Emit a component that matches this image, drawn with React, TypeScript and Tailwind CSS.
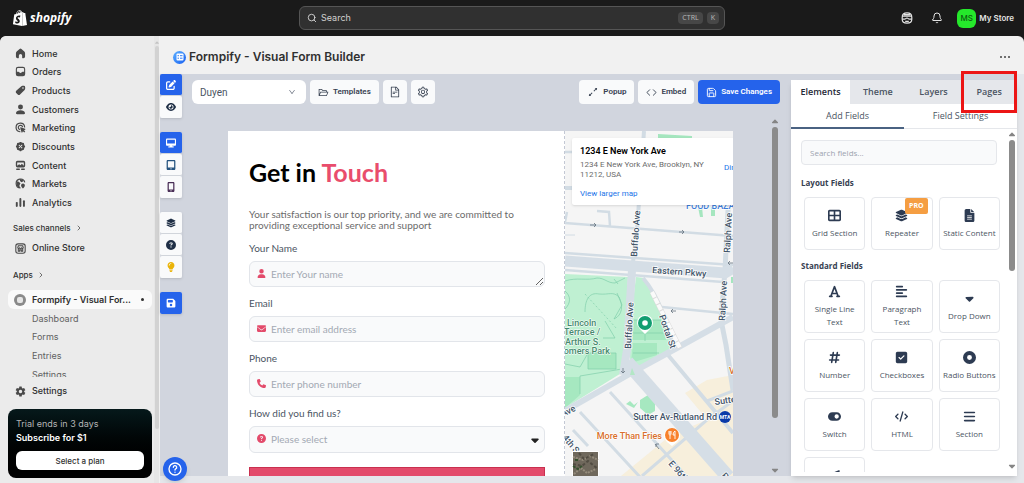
import type { ReactNode } from 'react'
import clsx from 'clsx'
import { ChevronRight, Code, Save, Search, Bell } from 'lucide-react'
import { AiOutlineArrowsAlt, AiOutlineDown, AiOutlineFileText, AiOutlineFolderOpen, AiOutlineSetting } from 'react-icons/ai'
import { IoSettingsSharp } from 'react-icons/io5'
import { SiShopify } from 'react-icons/si'
import { TbRosetteDiscountFilled } from 'react-icons/tb'
import {
    FaAlignLeft,
    FaBars,
    FaCaretDown,
    FaCircleDot,
    FaCircleQuestion,
    FaCode,
    FaDesktop,
    FaEnvelope,
    FaEye,
    FaFileLines,
    FaFloppyDisk,
    FaFont,
    FaHashtag,
    FaLayerGroup,
    FaLightbulb,
    FaLocationArrow,
    FaMobileScreenButton,
    FaPenToSquare,
    FaPhone,
    FaSquareCheck,
    FaTableCellsLarge,
    FaTabletScreenButton,
    FaToggleOn,
    FaUser,
} from 'react-icons/fa6'

function NavIcon({ children }: { children: ReactNode }) {
    return (
        <svg viewBox="0 0 20 20" className="size-[11px] shrink-0" fill="currentColor" aria-hidden="true">
            {children}
        </svg>
    )
}

const navItems = [
    {
        label: 'Home',
        icon: <NavIcon><path d="M8.300 1.800a2.600 2.600 0 0 1 3.400 0l5.200 4.600c.9.800 1.400 1.900 1.400 3.100v6a3 3 0 0 1-3 3h-1.500a.8.800 0 0 1-.8-.8V14a3 3 0 0 0-6 0v3.700c0 .4-.4.800-.8.800H4.700a3 3 0 0 1-3-3v-6c0-1.200.5-2.300 1.400-3.100z" /></NavIcon>,
    },
    {
        label: 'Orders',
        icon: <NavIcon><path fillRule="evenodd" d="M5.500 1.500h9a4 4 0 0 1 4 4v9a4 4 0 0 1-4 4h-9a4 4 0 0 1-4-4v-9a4 4 0 0 1 4-4zm0 2a2 2 0 0 0-2 2v5h2.700c.7 0 1.300.4 1.600 1 .4.900 1.200 1.300 2.200 1.300s1.800-.4 2.200-1.300c.3-.6.9-1 1.600-1h2.700v-5a2 2 0 0 0-2-2z" /></NavIcon>,
    },
    {
        label: 'Products',
        icon: <NavIcon><path fillRule="evenodd" d="M11 2.500c.700-.6 1.600-1 2.500-1h2.500a2.500 2.500 0 0 1 2.500 2.500v2.500c0 .9-.4 1.800-1 2.500l-8.300 8.300a3 3 0 0 1-4.200 0l-2.800-2.800a3 3 0 0 1 0-4.200zM14.500 7a1.500 1.500 0 1 0 0-3 1.500 1.500 0 0 0 0 3z" /></NavIcon>,
    },
    {
        label: 'Customers',
        icon: <NavIcon><circle cx="10" cy="5.500" r="4.500" /><path d="M1.800 16.500c.6-3 4-5 8.200-5s7.600 2 8.200 5c.3 1.200-.8 2-2 2H3.800c-1.200 0-2.300-.8-2-2z" /></NavIcon>,
    },
    {
        label: 'Marketing',
        icon: (
            <NavIcon>
                <path d="M17.500 9A7.800 7.800 0 1 0 9 17.700" fill="none" stroke="currentColor" strokeWidth="2.200" strokeLinecap="round" />
                <path d="M13.700 8.500A4 4 0 1 0 8.500 13.700" fill="none" stroke="currentColor" strokeWidth="2.200" strokeLinecap="round" />
                <path d="M9.500 10.500c-.3-.8.3-1.300 1-1l7.800 2.700c.9.300.9 1.300.1 1.700l-2 1 2.200 2.300-1.800 1.800-2.300-2.200-1 2c-.4.800-1.400.7-1.700-.1z" />
            </NavIcon>
        ),
    },
    { label: 'Discounts', icon: <TbRosetteDiscountFilled className="size-[11px] shrink-0" /> },
    {
        label: 'Content',
        icon: (
            <NavIcon>
                <path fillRule="evenodd" d="M4.500 1.500h11a3 3 0 0 1 3 3v6a3 3 0 0 1-3 3h-11a3 3 0 0 1-3-3v-6a3 3 0 0 1 3-3zM4 10.500l3.500-3 2.500 2 2.500-2.500 3.500 3.500v-6H4z" />
                <rect x="2" y="15.500" width="7" height="2.500" rx="1" />
                <rect x="11" y="15.500" width="7" height="2.500" rx="1" />
            </NavIcon>
        ),
    },
    {
        label: 'Markets',
        icon: (
            <NavIcon>
                <path d="M17.800 8A8 8 0 1 0 10 18" fill="none" stroke="currentColor" strokeWidth="2" />
                <path d="M3 6l4 1 3 3-2 3 1 5C4 17 1.500 12 3 6zM9 2l4 .5 3 3-4 2-3-2zM14.500 10a3.500 3.500 0 0 1 3.500 3.500c0 2-3.500 5.500-3.500 5.500S11 15.500 11 13.500a3.500 3.500 0 0 1 3.500-3.500z" />
            </NavIcon>
        ),
    },
    {
        label: 'Analytics',
        icon: (
            <NavIcon>
                <rect x="1.500" y="9" width="3.500" height="9" rx="1.500" />
                <rect x="8" y="2" width="3.500" height="16" rx="1.500" />
                <rect x="14.500" y="6" width="3.500" height="12" rx="1.500" />
            </NavIcon>
        ),
    },
]

const appPages = ['Dashboard', 'Forms', 'Entries', 'Settings']

const toolGroups = [
    [
        { label: 'Edit', icon: <FaPenToSquare />, active: true },
        { label: 'Preview', icon: <FaEye /> },
    ],
    [
        { label: 'Desktop', icon: <FaDesktop />, active: true },
        { label: 'Tablet', icon: <FaTabletScreenButton className="text-[#25537f]" /> },
        { label: 'Mobile', icon: <FaMobileScreenButton className="text-[#4a2f57]" /> },
    ],
    [
        { label: 'Layers', icon: <FaLayerGroup /> },
        { label: 'Help', icon: <FaCircleQuestion /> },
        { label: 'Tips', icon: <FaLightbulb className="text-[#eab308]" /> },
    ],
    [{ label: 'Save', icon: <FaFloppyDisk />, active: true }],
]

const layoutFields = [
    { label: 'Grid Section', icon: <FaTableCellsLarge /> },
    { label: 'Repeater', icon: <FaLayerGroup />, pro: true },
    { label: 'Static Content', icon: <FaFileLines /> },
]

const standardFields = [
    { label: 'Single Line Text', icon: <FaFont /> },
    { label: 'Paragraph Text', icon: <FaAlignLeft /> },
    { label: 'Drop Down', icon: <FaCaretDown /> },
    { label: 'Number', icon: <FaHashtag /> },
    { label: 'Checkboxes', icon: <FaSquareCheck /> },
    { label: 'Radio Buttons', icon: <FaCircleDot /> },
    { label: 'Switch', icon: <FaToggleOn /> },
    { label: 'HTML', icon: <FaCode /> },
    { label: 'Section', icon: <FaBars /> },
    { label: 'Location', icon: <FaLocationArrow /> },
]

function TopBar() {
    return (
        <header className="flex h-9 shrink-0 items-center bg-[#1a1a1a] px-3 text-[#e3e3e3]">
            <div className="flex flex-1 items-center gap-[2px] text-white">
                <SiShopify className="size-4" />
                <span className="text-[12px] font-bold italic font-['Open_Sans',sans-serif]">shopify</span>
            </div>
            <label className="flex h-6 w-[426px] items-center gap-1 rounded-md border border-[#555] bg-[#303030] pr-[5px] pl-[7px]">
                <Search size={10} />
                <input
                    type="text"
                    aria-label="Search"
                    placeholder="Search"
                    className="min-w-0 flex-1 bg-transparent text-[9px] outline-none placeholder:text-[#d0d0d0]"
                />
                <kbd className="rounded-sm bg-[#474747] px-1 text-[7px] leading-3 font-sans text-[#b5b5b5]">CTRL</kbd>
                <kbd className="rounded-sm bg-[#474747] px-1 text-[7px] leading-3 font-sans text-[#b5b5b5]">K</kbd>
            </label>
            <div className="flex flex-1 items-center justify-end gap-[14px]">
                <button aria-label="Assistant">
                    <svg viewBox="0 0 20 20" className="size-3" fill="none" stroke="currentColor" strokeWidth="2" aria-hidden="true">
                        <path d="M2 9c0-5 3-7.500 8-7.500S18 4 18 9v3c0 4-3 6.500-8 6.500S2 16 2 12z" />
                        <path d="M2 7h16M2 12h4c2 0 2-2 4-2s2 2 4 2h4M7 15.500h6M5 4.500h10" />
                    </svg>
                </button>
                <button aria-label="Notifications" className="ml-1">
                    <Bell size={12} />
                </button>
                <button className="-mr-[2px] flex items-center gap-[3px] text-[8px] font-semibold">
                    <span className="grid size-[19px] place-items-center rounded-md bg-[#25e82b] font-medium text-[#0c5c10]">MS</span>
                    My Store
                </button>
            </div>
        </header>
    )
}

function Sidebar() {
    return (
        <aside className="flex w-40 shrink-0 rounded-tl-md bg-[#ebebeb] text-[9px] text-[#303030]">
            <div className="flex min-w-0 flex-1 flex-col pl-2">
                <nav className="h-[341px] overflow-hidden pt-2">
                    <ul className="grid h-[168px] auto-rows-fr">
                        {navItems.map((item) => (
                            <li key={item.label}>
                                <a href="#" className="flex h-full items-center gap-[6px] pl-[7px] font-medium">
                                    <span className="text-[#4a4a4a]">{item.icon}</span>
                                    {item.label}
                                </a>
                            </li>
                        ))}
                    </ul>
                    <a href="#" className="mt-2 flex h-4 items-center gap-1 pl-[5px] text-[8px] font-medium">
                        Sales channels <ChevronRight size={8} />
                    </a>
                    <a href="#" className="mt-[2px] flex h-5 items-center gap-[6px] pl-[7px] font-medium">
                        <svg viewBox="0 0 20 20" className="size-[11px] text-[#4a4a4a]" fill="none" stroke="currentColor" strokeWidth="2" aria-hidden="true">
                            <rect x="1.500" y="1.500" width="17" height="17" rx="4" />
                            <path d="M5 9l1-4h8l1 4c-1.500 1.500-3 1-3.500 0-.8 1.300-2.200 1.300-3 0-.5 1-2 1.500-3.500 0zM6 10v5h2.500v-2.500h3V15H14v-5" />
                        </svg>
                        Online Store
                    </a>
                    <a href="#" className="mt-[9px] flex h-4 items-center gap-1 pl-[5px] text-[8px] font-medium">
                        Apps <ChevronRight size={8} />
                    </a>
                    <a href="#" className="mt-[7px] flex h-[19px] items-center gap-[6px] rounded-md bg-[#fafafa] pr-2 pl-[6px] font-semibold">
                        <span className="grid size-3 place-items-center rounded-full bg-[#8a8a8a]">
                            <span className="size-[6px] rounded-xs bg-[#e6e6e6]" />
                        </span>
                        <span className="flex-1">Formpify - Visual For...</span>
                        <span className="size-[3px] rounded-full bg-[#303030]" />
                    </a>
                    <ul className="grid h-[75px] auto-rows-fr text-[#616161]">
                        {appPages.map((page) => (
                            <li key={page}>
                                <a href="#" className="flex h-full items-center pl-6">{page}</a>
                            </li>
                        ))}
                    </ul>
                </nav>
                <a href="#" className="mt-1 flex h-5 items-center gap-[6px] pl-[7px] font-medium">
                    <IoSettingsSharp className="size-[11px] text-[#4a4a4a]" />
                    Settings
                </a>
                <div className="mt-2 rounded-lg bg-linear-to-b from-[#06191b] to-black p-2 text-[9px] text-[#b5b5b5]">
                    <p className="leading-[14px]">Trial ends in 3 days</p>
                    <p className="leading-[14px] font-semibold text-white">Subscribe for $1</p>
                    <button className="mt-[6px] h-[19px] w-full rounded-md bg-white text-[8px] font-medium text-[#303030]">
                        Select a plan
                    </button>
                </div>
            </div>
            <div className="ml-[2px] flex w-[6px] flex-col items-center border-r border-[#f1f1f1] bg-[#e6e6e6] pt-1">
                <FaCaretDown className="size-[6px] rotate-180 text-[#c4c4c4]" />
                <span className="h-[383px] w-1 rounded-full bg-[#d2d2d2]" />
            </div>
        </aside>
    )
}

function ToolStrip() {
    return (
        <div className="flex w-[22px] shrink-0 flex-col gap-[14px]">
            {toolGroups.map((group, i) => (
                <div key={i} className="flex flex-col divide-y divide-[#d1d5db] shadow-sm">
                    {group.map((tool) => (
                        <button
                            key={tool.label}
                            aria-label={tool.label}
                            className={clsx(
                                'grid h-[22px] place-items-center rounded-xs text-[10px]',
                                tool.active ? 'bg-[#2563eb] text-white' : 'bg-[#f9fafb] text-[#1f2f46]'
                            )}
                        >
                            {tool.icon}
                        </button>
                    ))}
                </div>
            ))}
        </div>
    )
}

const plainButton = 'flex h-6 items-center gap-1 rounded-sm bg-[#f9fafb] px-2 text-[#374151]'
const iconButton = 'grid size-6 place-items-center rounded-sm bg-[#f9fafb] text-[#374151]'

function BuilderToolbar() {
    return (
        <div className="flex items-center gap-1 pr-[11px] pl-[10px] text-[8px] font-semibold font-['Roboto',sans-serif]">
            <div className="relative w-[114px]">
                <select
                    aria-label="Form"
                    className="h-6 w-full appearance-none rounded-md bg-white pl-2 text-[10px] font-normal text-[#4b5563] outline-none"
                >
                    <option>Duyen</option>
                </select>
                <AiOutlineDown size={8} className="pointer-events-none absolute top-2 right-[10px] text-[#6b7280]" />
            </div>
            <button className={plainButton}>
                <AiOutlineFolderOpen size={11} />
                Templates
            </button>
            <button className={iconButton} aria-label="Document">
                <AiOutlineFileText size={12} />
            </button>
            <button className={iconButton} aria-label="Settings">
                <AiOutlineSetting size={12} />
            </button>
            <button className={clsx(plainButton, 'ml-auto')}>
                <AiOutlineArrowsAlt size={12} />
                Popup
            </button>
            <button className={plainButton}>
                <Code size={11} />
                Embed
            </button>
            <button className="flex h-6 items-center gap-1 rounded-sm bg-[#2563eb] px-2 text-white">
                <Save size={11} />
                Save Changes
            </button>
        </div>
    )
}

const fieldBox =
    'block w-full rounded-md border border-[#e2e5ea] bg-[#f9fafb] pl-[21px] text-[10px] outline-none placeholder:text-[#a3a9b3]'

function Field({ id, label, icon, children }: { id: string; label: string; icon: ReactNode; children: ReactNode }) {
    return (
        <div className="mb-[9px]">
            <label htmlFor={id} className="mb-[6px] block text-[10px] leading-[14px] text-[#4b5563]">{label}</label>
            <div className="relative">
                {children}
                <span className="pointer-events-none absolute top-2 left-2 text-[9px] text-[#e34b6b]">{icon}</span>
            </div>
        </div>
    )
}

function ContactForm() {
    return (
        <form className="flex-1 pt-7 pr-[19px] pl-[21px] font-['Lato',sans-serif]">
            <h2 className="text-[25px] leading-[26px] font-bold text-black">
                Get in <span className="text-[#e94d6c]">Touch</span>
            </h2>
            <p className="mt-6 mb-[10px] text-[10px] leading-[11px] text-[#6b6b6b]">
                Your satisfaction is our top priority, and we are committed to<br />
                providing exceptional service and support
            </p>
            <Field id="name" label="Your Name" icon={<FaUser />}>
                <textarea id="name" placeholder="Enter Your name" className={clsx(fieldBox, 'h-[26px] resize pt-[5px]')} />
            </Field>
            <Field id="email" label="Email" icon={<FaEnvelope />}>
                <input id="email" type="email" placeholder="Enter email address" className={clsx(fieldBox, 'h-[26px]')} />
            </Field>
            <Field id="phone" label="Phone" icon={<FaPhone />}>
                <input id="phone" type="tel" placeholder="Enter phone number" className={clsx(fieldBox, 'h-[26px]')} />
            </Field>
            <Field id="source" label="How did you find us?" icon={<FaCircleQuestion />}>
                <select id="source" className={clsx(fieldBox, 'h-[27px] appearance-none text-[#a3a9b3]')}>
                    <option>Please select</option>
                </select>
                <FaCaretDown className="pointer-events-none absolute top-2 right-1 size-3 text-[#222]" />
            </Field>
            <button type="submit" className="mt-[5px] h-8 w-full border border-[#c9304f] bg-[#e34b6b] text-[10px] font-bold text-white">
                Submit
            </button>
        </form>
    )
}

function MapDrawing() {
    return (
        <svg viewBox="0 0 168 345" className="block h-[345px] w-full" preserveAspectRatio="xMinYMin slice" aria-hidden="true">
            <rect width="168" height="345" fill="#f5f5f5" />
            <path d="M120 262l22-13 26-5v55l-14 4zM56 345l50-41 38-16 24-13v70z" fill="#f7efdc" />
            <g fill="#bff0d2">
                <path d="M0 143l63 3-5 95-58 36zM71 146l8 1 17 30 12 40-5 7-36 18-4-30z" />
                <path d="M93 3l34 2v3l-34-1zM133 76l4 0 1 10-3 0zM146 76h4v9h-4zM166 146h2v6h-2z" fill="#a5e6bf" />
                <path d="M69 189h27l5 20H67zM23 222h28v16H23zM0 246h15v18L0 277zM68 212h24v12l-26 8z" fill="#a6e8c0" />
                <path d="M75 269l8-5 7 6v10l-7 4-8-7zM61 273l4-3 4 4 4-3-4 6z" fill="#a6e8c0" />
            </g>
            <g fill="none" stroke="#7fceab" strokeWidth="0.7">
                <path d="M0 150c12-4 22 0 32-3 8 0 10 5 18 5l10-5M53 153l-4-5M20 181c0-12 4-20 14-18 10 1 14-3 20 3 4 8 4 18-5 22M0 160c6 5 6 12 0 18M49 188l8-14-5-12M0 233l15 3 8-14M15 245v18M15 245l48-8M40 190l10 17H38M8 209h18M69 189h27M68 202h30M80 202v8M23 222h28v16H23zM68 222h26" />
                <path d="M20 163l32 35" strokeDasharray="2 2" />
            </g>
            <g fill="none" stroke="#d2dce4" strokeWidth="2.500">
                <path d="M0 21h8M0 92l168 13M2 81l-2 10M32 80l12 1 1 14" />
                <path d="M0 104h10" strokeWidth="1" />
                <path d="M0 57h8" strokeWidth="4" />
                <path d="M0 122l168 12M0 139l158 12M97 176l71 7" />
                <path d="M79 0l-7 99-5 40" strokeWidth="4" />
                <path d="M164 60l-4 79-4 50 5 25 7 45" strokeWidth="5" />
                <path d="M78 147q12 14 20 36l12 35M103 224l65 78" strokeWidth="4" />
                <path d="M45 261l77 85M15 281l60 65M8 299l15 16M77 345l66-57 25-18M142 270l26-10" strokeWidth="3" />
            </g>
            <g fill="none" stroke="#d5dee6">
                <path d="M0 130l160 12 8-5" strokeWidth="11" />
                <path d="M67 139l-5 80-4 25" strokeWidth="8" />
                <path d="M0 280l68-39 42-23 58-32" strokeWidth="6" />
                <path d="M62 231l101 115" strokeWidth="14" />
            </g>
            <path d="M87 161l28 56" fill="none" stroke="#dcdcdc" strokeWidth="5" />
            <path d="M87 161l28 56" fill="none" stroke="#fafafa" strokeWidth="4" strokeDasharray="6 1" />
            <path d="M67 237l3 7h-5z" fill="#b2e7c5" />
            <g fill="none" stroke="#65727e" strokeWidth="0.8">
                <path d="M25 94h6m-2-2l2 2-2 2M114 101h5m-2-2l2 2-2 2M111 180h-5m2-2l-2 2 2 2M58 237v5m-2-2l2 2 2-2M168 132h-5m2-2l-2 2 2 2M90 313l4 5M91 316v-3h3" />
            </g>
            <g
                className="font-['Roboto',sans-serif]"
                fontSize="9"
                fontWeight="500"
                fill="#3f5468"
                stroke="#fff"
                strokeWidth="1.500"
                strokeLinejoin="round"
                paintOrder="stroke"
            >
                <text transform="translate(87 142) rotate(4)">Eastern Pkwy</text>
                <text transform="translate(72 126) rotate(-86)">Buffalo Ave</text>
                <text transform="translate(66 218) rotate(-87)">Buffalo Ave</text>
                <text transform="translate(80 37) rotate(-86)">Buffalo</text>
                <text transform="translate(165 122) rotate(-87)">Ralph Ave</text>
                <text transform="translate(160 190) rotate(-87)">Ralph Ave</text>
                <text transform="translate(94 185) rotate(71)">Portal St</text>
                <text transform="translate(150 274) rotate(-8)">Sutter Ave</text>
                <text transform="translate(-2 286) rotate(-27)">Ave</text>
                <text transform="translate(-3 307) rotate(50)">4th St</text>
                <text transform="translate(103 333) rotate(48)">E 96th St</text>
                <text transform="translate(156 345) rotate(48)">Rockaway</text>
                <text x="152" y="289" textAnchor="end">Sutter Av-Rutland Rd</text>
                <text x="97" y="308" textAnchor="end" fill="#d9702c">More Than Fries</text>
                <text x="164" y="243" fill="#d9702c">Va</text>
                <text x="121" y="78" fill="#3f7fdb">FOOD BAZAAR</text>
                <g fill="#468a6e" strokeWidth="1">
                    <text x="2" y="195">Lincoln</text>
                    <text x="-1" y="204">Terrace /</text>
                    <text x="0" y="214">Arthur S.</text>
                    <text x="45" y="223" textAnchor="end">Somers Park</text>
                </g>
            </g>
            <path d="M80 203l-5-5a8 8 0 1 1 10 0z" fill="#fff" />
            <circle cx="80" cy="192" r="7" fill="#129e71" />
            <circle cx="80" cy="192" r="2.800" fill="#fff" />
            <path d="M107 315l-5-4a8 8 0 1 1 10 0z" fill="#fff" />
            <circle cx="107" cy="304" r="7" fill="#f8802b" />
            <path d="M104 300v3q0 1 1 1v4M106 300v3q0 1-1 1M105 300v3M110 308v-8q-2 1-2 4h2" fill="none" stroke="#fff" strokeWidth="0.9" />
            <circle cx="160" cy="286" r="6" fill="#0a3aa8" />
            <text x="160" y="288" textAnchor="middle" fontSize="5" fontWeight="700" fill="#fff" className="font-['Roboto',sans-serif]">MTA</text>
            <rect x="7" y="320" width="27" height="30" rx="1" fill="#fff" />
            <rect x="8" y="321" width="25" height="25" fill="#6f685c" />
            <g fill="none" strokeWidth="2">
                <path d="M8 326l10 3 7-4 8 4M9 343l7-6 6 5 9-4" stroke="#958c7c" strokeDasharray="2 1" />
                <path d="M8 333l9 2 6-5 10 8M14 322l5 6 10-5" stroke="#514c42" strokeDasharray="3 2" />
                <path d="M8 335l5 3 4-3M10 329h3" stroke="#36502f" strokeDasharray="3 1" />
            </g>
        </svg>
    )
}

function MapEmbed() {
    return (
        <div className="relative w-[169px] shrink-0 overflow-hidden border-l border-dashed border-[#c3c8d4]">
            <MapDrawing />
            <div className="absolute top-[7px] left-[7px] flex w-[190px] justify-between rounded-xs bg-white px-2 pt-[6px] pb-[5px] text-[8px] font-['Roboto',sans-serif] shadow-sm">
                <div className="w-[130px]">
                    <p className="text-[9px] leading-[14px] font-semibold text-black">1234 E New York Ave</p>
                    <p className="mt-[2px] leading-[10px] text-[#6b6b6b]">1234 E New York Ave, Brooklyn, NY 11212, USA</p>
                    <a href="#" className="mt-2 block leading-[12px] text-[#1a73e8]">View larger map</a>
                </div>
                <a href="#" className="mt-[18px] w-[30px] leading-3 text-[#1a73e8]">Directions</a>
            </div>
        </div>
    )
}

function FieldGrid({ fields }: { fields: { label: string; icon: ReactNode; pro?: boolean }[] }) {
    return (
        <div className="mr-[-3px] ml-[3px] grid grid-cols-3 gap-[6px]">
            {fields.map((field) => (
                <button
                    key={field.label}
                    className="relative flex h-[53px] flex-col items-center justify-center rounded-sm border border-[#e5e7eb] text-[8px] leading-[13px] text-[#4b5563]"
                >
                    {field.pro && (
                        <span className="absolute top-0 right-1 rounded-xs bg-[#f59e42] px-1 text-[7px] leading-4 font-bold text-white">
                            PRO
                        </span>
                    )}
                    <span className="mb-1 text-[13px] text-[#2d3b52]">{field.icon}</span>
                    <span className="max-w-[54px]">{field.label}</span>
                </button>
            ))}
        </div>
    )
}

function FieldsPanel() {
    return (
        <aside className="flex w-[226px] shrink-0 flex-col bg-white shadow-md">
            <div className="grid shrink-0 grid-cols-[59px_1fr_1fr_1fr] bg-[#e5e7eb] text-[9px] font-semibold text-[#4b5563]">
                <button className="h-6 bg-white text-[#1f2937]">Elements</button>
                <button>Theme</button>
                <button>Layers</button>
                <div className="relative grid">
                    <button>Pages</button>
                    <span className="pointer-events-none absolute inset-x-0 -top-[9px] -bottom-[9px] border-3 border-[#ec1515]" />
                </div>
            </div>
            <div className="grid shrink-0 grid-cols-2 text-[9px] text-[#4b5563]">
                <button className="h-[25px] border-b-2 border-[#4a6282]">Add Fields</button>
                <button className="border-b border-[#e5e7eb]">Field Settings</button>
            </div>
            <div className="flex min-h-0 flex-1 pb-1">
                <div className="min-w-0 flex-1 overflow-hidden px-[10px] pt-[11px]">
                    <input
                        type="text"
                        aria-label="Search fields"
                        placeholder="Search fields..."
                        className="block h-[25px] w-full rounded-sm border border-[#e5e7eb] bg-[#f9fafb] px-2 text-[8px] outline-none placeholder:text-[#9ca3af]"
                    />
                    <h3 className="mt-3 mb-2 text-[8px] leading-3 font-bold text-[#374151]">Layout Fields</h3>
                    <FieldGrid fields={layoutFields} />
                    <h3 className="mt-[10px] mb-2 text-[8px] leading-3 font-bold text-[#374151]">Standard Fields</h3>
                    <FieldGrid fields={standardFields} />
                </div>
                <ScrollBar thumb="h-[131px]" />
            </div>
        </aside>
    )
}

function ScrollBar({ thumb }: { thumb: string }) {
    return (
        <div className="flex w-[10px] shrink-0 flex-col items-center py-px">
            <FaCaretDown className="size-[10px] rotate-180 text-[#858585]" />
            <span className={clsx('w-[6px] rounded-full bg-[#8b8b8b]', thumb)} />
            <FaCaretDown className="mt-auto size-[10px] text-[#858585]" />
        </div>
    )
}

export default function App() {
    return (
        <div className="flex h-screen flex-col overflow-hidden bg-[#1a1a1a] font-['Inter',sans-serif]">
            <TopBar />
            <div className="flex min-h-0 flex-1 overflow-hidden rounded-t-md bg-[#f1f1f1]">
                <Sidebar />
                <main className="flex min-w-0 flex-1 flex-col">
                    <div className="flex h-[38px] shrink-0 items-center gap-[3px] pt-1 pr-[14px] pl-[13px] text-[#303030]">
                        <span className="grid size-[13px] place-items-center rounded-full bg-linear-to-br from-[#5fb0ff] to-[#1a5cf0]">
                            <svg viewBox="0 0 8 8" className="size-2" aria-hidden="true">
                                <rect x="0.500" y="0.500" width="7" height="7" rx="1" fill="#fff" />
                                <path d="M1.500 2.700h1.500M4 2.700h2.500M1.500 5.200h1.500M4 5.200h2.500" stroke="#2f7cf6" strokeWidth="1" />
                            </svg>
                        </span>
                        <h1 className="text-[12px] font-semibold">Formpify - Visual Form Builder</h1>
                        <button aria-label="More actions" className="ml-auto flex gap-[2px]">
                            <span className="size-[2px] rounded-full bg-[#444]" />
                            <span className="size-[2px] rounded-full bg-[#444]" />
                            <span className="size-[2px] rounded-full bg-[#444]" />
                        </button>
                    </div>
                    <div className="flex min-h-0 flex-1 bg-[#e5e7eb] pr-[7px] pb-[7px] font-['Open_Sans',sans-serif]">
                        <div className="flex min-w-0 flex-1 bg-[#d1d5de]">
                            <ToolStrip />
                            <div className="flex min-w-0 flex-1 flex-col pt-[6px]">
                                <BuilderToolbar />
                                <div className="mt-3 flex min-h-0 flex-1">
                                    <div className="min-w-0 flex-1 overflow-hidden pt-[15px] pr-[37px] pl-[46px]">
                                        <div className="flex bg-white">
                                            <ContactForm />
                                            <MapEmbed />
                                        </div>
                                    </div>
                                    <div className="flex pr-[11px]">
                                        <ScrollBar thumb="h-[291px]" />
                                    </div>
                                </div>
                            </div>
                            <div className="flex pt-[6px]">
                                <FieldsPanel />
                            </div>
                        </div>
                    </div>
                </main>
            </div>
            <button
                aria-label="Help"
                className="fixed bottom-[2px] left-[163px] grid size-6 place-items-center rounded-full bg-[#2563eb] text-white shadow-md"
            >
                <svg viewBox="0 0 24 24" className="size-4" fill="none" stroke="currentColor" strokeWidth="2" strokeLinecap="round" aria-hidden="true">
                    <circle cx="12" cy="12" r="9" />
                    <path d="M9.500 9.500a2.500 2.500 0 1 1 3.500 2.300c-.7.400-1 .9-1 1.700M12 16.800v.1" />
                </svg>
            </button>
        </div>
    )
}
